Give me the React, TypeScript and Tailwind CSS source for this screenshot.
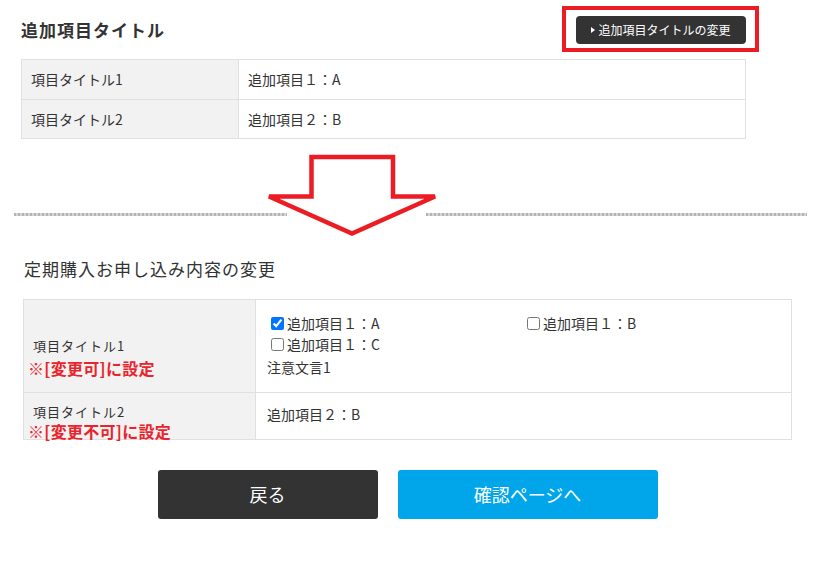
export default function App() {
  return (
    <div className="relative min-h-[573px] w-[819px] bg-white text-[#333] font-['Noto_Sans_CJK_JP',sans-serif]">
      {/* Section 1 */}
      <div className="ml-[21px] w-[725px] pt-[16px]">
        <div className="flex h-[28px] items-center justify-between">
          <h2 className="text-[17px] font-bold leading-[28px] tracking-[1px]">追加項目タイトル</h2>
          <div className="relative">
            <div className="absolute -bottom-[8px] -left-[14px] -right-[13px] -top-[10px] border-4 border-[#ec1c24]" />
            <button className="relative flex h-[28px] w-[170px] items-center justify-center gap-[3px] rounded-[4px] bg-[#333] text-[12px] leading-none text-white">
              <span className="inline-block h-0 w-0 border-y-[3.5px] border-l-[4px] border-y-transparent border-l-white" />
              <span>追加項目タイトルの変更</span>
            </button>
          </div>
        </div>

        <div className="mt-[15px] border border-[#e0e0e0] text-[14px]">
          <div className="grid h-[39px] grid-cols-[217px_1fr]">
            <div className="flex items-center border-r border-[#e0e0e0] bg-[#f2f2f2] pl-[9px]">項目タイトル1</div>
            <div className="flex items-center pl-[9px]">追加項目１：A</div>
          </div>
          <div className="grid h-[39px] grid-cols-[217px_1fr] border-t border-[#e0e0e0]">
            <div className="flex items-center border-r border-[#e0e0e0] bg-[#f2f2f2] pl-[9px]">項目タイトル2</div>
            <div className="flex items-center pl-[9px]">追加項目２：B</div>
          </div>
        </div>
      </div>

      {/* Divider lines */}
      <div className="ml-[14px] mt-[74px] flex">
        <div className="h-[3px] w-[273px] bg-[repeating-linear-gradient(90deg,#b4b4b4_0px,#b4b4b4_2px,#d6d6d6_2px,#d6d6d6_4px)]" />
        <div className="ml-[139px] h-[3px] w-[381px] bg-[repeating-linear-gradient(90deg,#b4b4b4_0px,#b4b4b4_2px,#d6d6d6_2px,#d6d6d6_4px)]" />
      </div>

      {/* Heading */}
      <h2 className="ml-[24px] mt-[40px] text-[17px] leading-[26px] tracking-[1px]">定期購入お申し込み内容の変更</h2>

      {/* Table 2 */}
      <div className="ml-[23px] mt-[17px] w-[769px]">
        <div className="border border-[#e0e0e0] text-[14px]">
          <div className="grid h-[92px] grid-cols-[232px_1fr]">
            <div className="relative flex items-center border-r border-[#e0e0e0] bg-[#f2f2f2] pl-[9px]">
              <span className="text-[13px] leading-[16px] tracking-[1px]">項目タイトル1</span>
              <span className="absolute left-[4px] top-[60px] text-[16px] font-bold leading-[16px] tracking-[0.3px] text-[#e9242c]">※[変更可]に設定</span>
            </div>
            <div className="py-[13px] pl-[11px]">
              <div className="grid grid-cols-[256px_256px]">
                <label className="flex h-[21px] items-center">
                  <input type="checkbox" defaultChecked className="m-[3px_3px_3px_4px] h-[13px] w-[13px]" />
                  <span>追加項目１：A</span>
                </label>
                <label className="flex h-[21px] items-center">
                  <input type="checkbox" className="m-[3px_3px_3px_4px] h-[13px] w-[13px]" />
                  <span>追加項目１：B</span>
                </label>
                <label className="flex h-[21px] items-center">
                  <input type="checkbox" className="m-[3px_3px_3px_4px] h-[13px] w-[13px]" />
                  <span>追加項目１：C</span>
                </label>
              </div>
              <div className="mt-[2px] leading-[21px]">注意文言1</div>
            </div>
          </div>
          <div className="grid h-[47px] grid-cols-[232px_1fr] border-t border-[#e0e0e0]">
            <div className="relative flex items-center border-r border-[#e0e0e0] bg-[#f2f2f2] pb-[8px] pl-[9px]">
              <span className="text-[13px] leading-[16px] tracking-[1px]">項目タイトル2</span>
              <span className="absolute left-[4px] top-[31px] text-[16px] font-bold leading-[15px] tracking-[0.3px] text-[#e9242c]">※[変更不可]に設定</span>
            </div>
            <div className="flex items-center pb-[4px] pl-[11px]">追加項目２：B</div>
          </div>
        </div>

        <div className="mt-[30px] flex justify-center gap-[20px]">
          <button className="flex h-[49px] w-[220px] items-center justify-center rounded-[3px] bg-[#333] text-[18px] text-white">戻る</button>
          <button className="flex h-[49px] w-[260px] items-center justify-center rounded-[3px] bg-[#00a6e9] text-[18px] text-white">確認ページへ</button>
        </div>
      </div>

      {/* Annotation arrow */}
      <svg className="absolute left-[265px] top-[153px]" width="175" height="86" viewBox="0 0 175 86">
        <polygon
          points="46.5,4 128,4 128,43.5 170,43.5 87,80.5 4,43.5 46.5,43.5"
          fill="white"
          stroke="#ec1c24"
          strokeWidth="4.5"
        />
      </svg>
    </div>
  );
}
